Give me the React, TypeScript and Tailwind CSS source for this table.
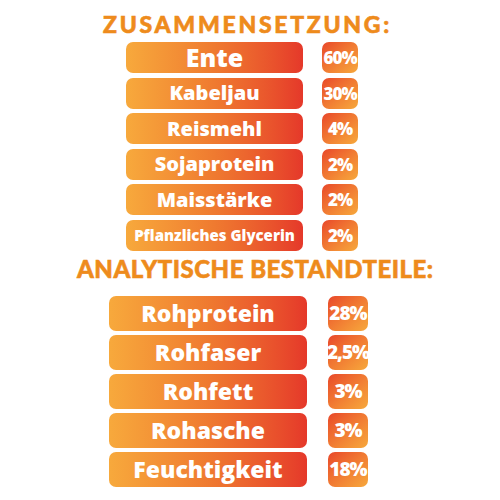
type Item = {
  name: string;
  value: string;
  size?: string;
};

const composition: Item[] = [
  { name: "Ente", value: "60%", size: "text-[25px]" },
  { name: "Kabeljau", value: "30%" },
  { name: "Reismehl", value: "4%" },
  { name: "Sojaprotein", value: "2%" },
  { name: "Maisstärke", value: "2%" },
  { name: "Pflanzliches Glycerin", value: "2%", size: "text-[15px]" },
];

const analysis: Item[] = [
  { name: "Rohprotein", value: "28%" },
  { name: "Rohfaser", value: "2,5%" },
  { name: "Rohfett", value: "3%" },
  { name: "Rohasche", value: "3%" },
  { name: "Feuchtigkeit", value: "18%" },
];

const Row = ({
  item,
  big,
}: {
  item: Item;
  big?: boolean;
}): JSX.Element => {
  return (
    <li className={big ? "flex items-center gap-[21px]" : "flex items-center gap-[19px]"}>
      <div
        className={
          (big ? "w-[198px] h-[35px] " : "w-[177px] h-[31px] ") +
          "flex items-center justify-center rounded-[7px] bg-gradient-to-r from-[#f7a93c] via-[#ef7a30] to-[#e5382a] text-white font-extrabold leading-none"
        }
      >
        <span className={item.size ?? (big ? "text-[23px]" : "text-[20px]")}>{item.name}</span>
      </div>
      <div
        className={
          (big ? "w-[40px] h-[35px] text-[19px] " : "w-[36px] h-[31px] text-[17px] ") +
          "flex items-center justify-center rounded-[7px] bg-gradient-to-br from-[#e8462a] to-[#f6a83c] text-white font-extrabold leading-none tracking-[-1px] whitespace-nowrap"
        }
      >
        {item.value}
      </div>
    </li>
  );
};

export default function App() {
  return (
    <div className="w-[500px] h-[500px] bg-white overflow-hidden font-['Open_Sans',sans-serif]">
      <h1 className="pt-[10px] pl-[103px] whitespace-nowrap text-[23px] leading-[28px] font-black text-[#ee8b1c] tracking-[2.7px] font-['Lato',sans-serif] [-webkit-text-stroke:0.6px_#ee8b1c]">
        ZUSAMMENSETZUNG:
      </h1>
      <ul className="mt-[4px] pl-[126px] flex flex-col gap-[4.5px]">
        {composition.map((item) => (
          <Row key={item.name} item={item} />
        ))}
      </ul>
      <h2 className="mt-[3px] pl-[77px] whitespace-nowrap text-[24px] leading-[30px] font-black text-[#ee8b1c] tracking-[0.5px] font-['Lato',sans-serif] [-webkit-text-stroke:0.6px_#ee8b1c]">
        ANALYTISCHE BESTANDTEILE:
      </h2>
      <ul className="mt-[12px] pl-[109px] flex flex-col gap-[4px]">
        {analysis.map((item) => (
          <Row key={item.name} item={item} big />
        ))}
      </ul>
    </div>
  );
}
